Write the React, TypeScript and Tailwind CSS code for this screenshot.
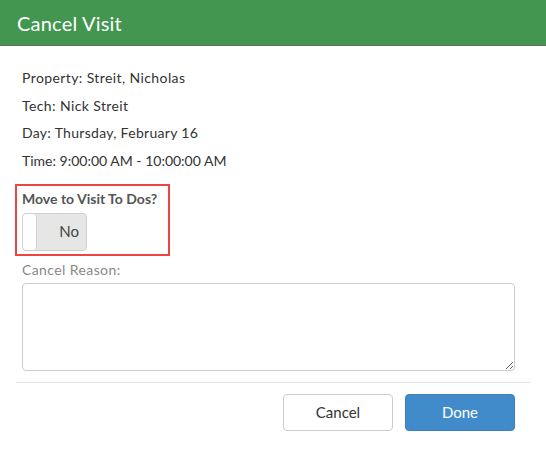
import React from "react";

export default function App() {
  return (
    <div className="w-[546px] h-[470px] bg-white" style={{ fontFamily: "Lato, 'Open Sans', sans-serif" }}>
      <div className="h-[46px] bg-[#43964f] border-b border-[#6b6b6b] flex items-center pl-[17px]">
        <span className="text-white text-[20px] leading-none tracking-[0.2px]">Cancel Visit</span>
      </div>
      <div className="pl-[22px] pt-[22px] text-[14px] text-[#333] leading-[20px] flex flex-col gap-[7.5px]">
        <div className="tracking-[0.4px]">Property: Streit, Nicholas</div>
        <div className="tracking-[0.4px]">Tech: Nick Streit</div>
        <div className="tracking-[0.3px]">Day: Thursday, February 16</div>
        <div>Time: 9:00:00 AM - 10:00:00 AM</div>
      </div>
      <div className="ml-[15px] mt-[13px] w-[155px] h-[72px] border-2 border-[#ef4444] pl-[5px] pt-[3px]">
        <div className="text-[14px] font-bold text-[#555] leading-[20px]">Move to Visit To Dos?</div>
        <div className="mt-[4px] w-[65px] h-[38px] rounded-[4px] border border-[#d0d0d0] bg-[#e6e6e6] flex items-center relative">
          <div className="absolute left-0 top-0 bottom-0 w-[14px] bg-white rounded-[4px] border-r border-[#d0d0d0]" />
          <span className="ml-auto mr-[7px] text-[15px] text-[#444]">No</span>
        </div>
      </div>
      <div className="pl-[22px] mt-[4px] text-[14px] text-[#888] leading-[20px] tracking-[0.4px]">Cancel Reason:</div>
      <div className="pl-[22px] pr-[31px] mt-[3px]">
        <textarea className="block w-full h-[88px] border border-[#ccc] rounded-[4px] resize-y" />
      </div>
      <div className="mx-[16px] mt-[11px] border-t border-[#e5e5e5]" />
      <div className="flex justify-end gap-[12px] pr-[31px] mt-[11px]">
        <button className="w-[110px] h-[37px] rounded-[4px] border border-[#ccc] bg-white text-[15px] text-[#333]">Cancel</button>
        <button className="w-[110px] h-[37px] rounded-[4px] border border-[#3a80bf] bg-[#428bca] text-[15px] text-white">Done</button>
      </div>
    </div>
  );
}
